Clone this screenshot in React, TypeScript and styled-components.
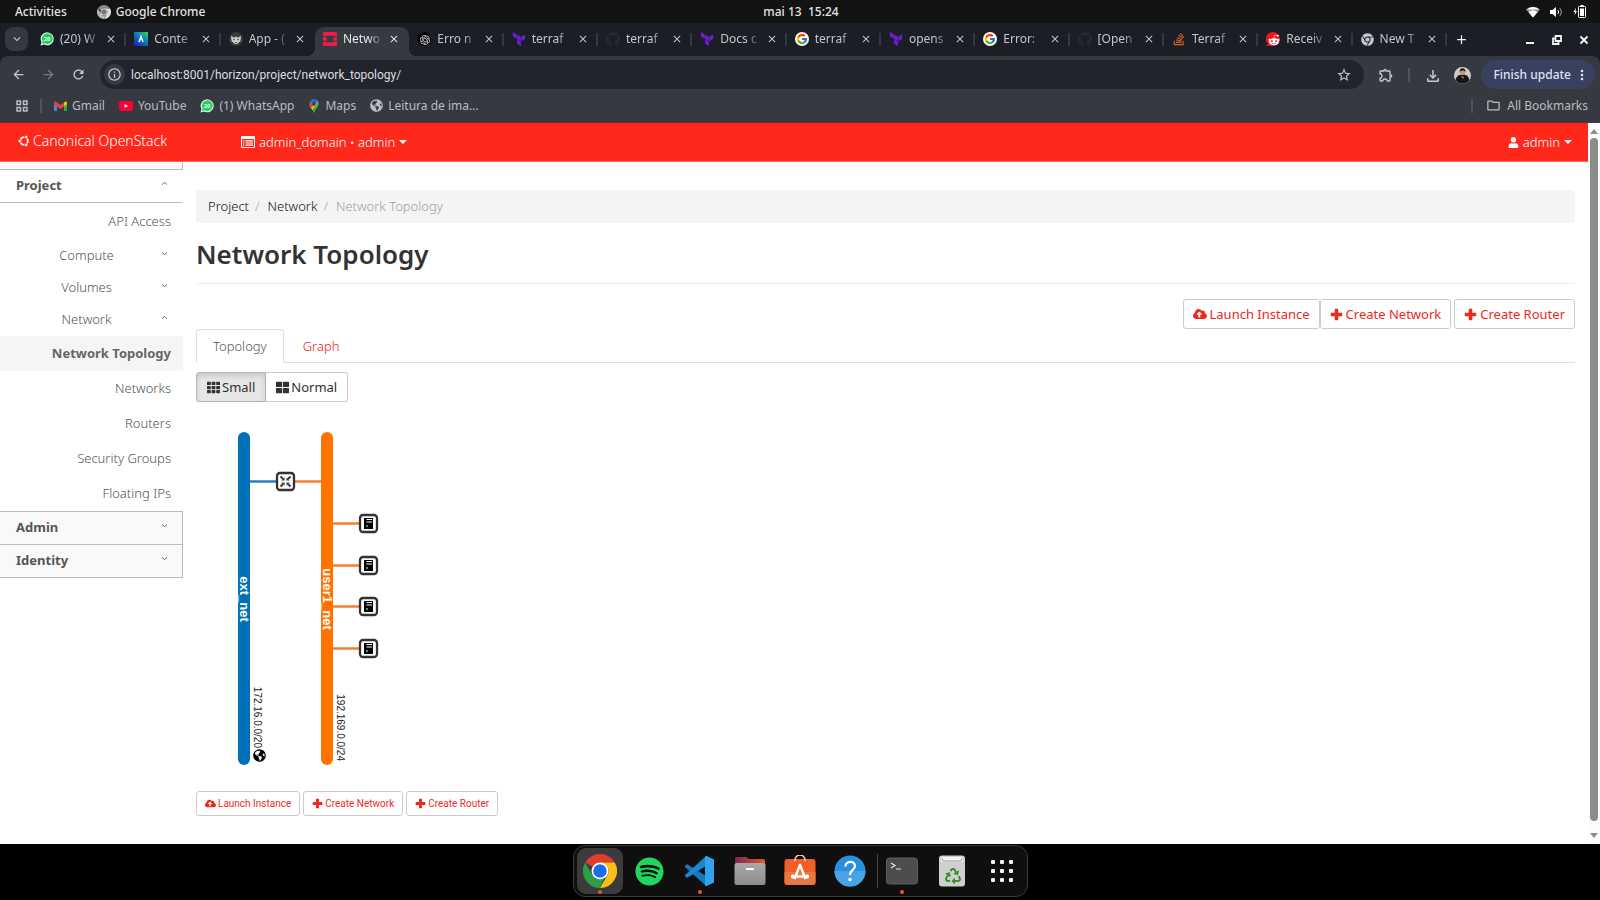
import React from 'react';
import styled, { createGlobalStyle, css } from 'styled-components';
import {
  FaUser, FaCloudUploadAlt, FaTh, FaThLarge, FaGithub, FaStackOverflow, FaChrome,
  FaRedditAlien, FaSpotify, FaRecycle, FaGlobeAmericas,
} from 'react-icons/fa';
import { SiTerraform } from 'react-icons/si';
import { RiOpenaiFill } from 'react-icons/ri';
import { FcGoogle } from 'react-icons/fc';
import {
  MdArrowBack, MdArrowForward, MdRefresh, MdOutlineInfo, MdStarBorder, MdOutlineExtension,
  MdOutlineFileDownload, MdMoreVert, MdOutlineFolder, MdClose, MdAdd, MdExpandMore,
} from 'react-icons/md';

const UI = `"Noto Sans", "Open Sans", sans-serif`;
const COMPACT = `Roboto, "Noto Sans", sans-serif`;
const RED = '#ff281a';

const GlobalStyle = createGlobalStyle`
  *, *::before, *::after { box-sizing: border-box; }
  body { margin: 0; background: #000; }
  button, input { font: inherit; color: inherit; margin: 0; padding: 0; border: 0; background: none; }
  button { cursor: pointer; }
  a { color: inherit; text-decoration: none; }
  ul, ol { list-style: none; margin: 0; padding: 0; }
  svg { display: block; flex: none; }
`;

const Desktop = styled.div`
  min-height: 100vh;
  display: flex;
  flex-direction: column;
  background: #000;
  font-family: ${UI};
`;

/* ---------- system bar ---------- */
const SystemBar = styled.header`
  display: grid;
  grid-template-columns: 1fr auto 1fr;
  align-items: center;
  height: 23px;
  padding: 0 13px 0 15px;
  background: #131313;
  color: #e2e2e2;
  font-size: 12px;
  line-height: 16px;
  font-weight: 500;
`;
const SystemLeft = styled.div`
  display: flex;
  align-items: center;
  gap: 30px;
`;
const AppMenu = styled.button`
  display: flex;
  align-items: center;
  gap: 5px;
`;
const Clock = styled.time`
  white-space: pre;
`;
const Tray = styled.div`
  display: flex;
  align-items: center;
  justify-content: flex-end;
  gap: 10px;
`;

/* ---------- browser chrome ---------- */
const TabStrip = styled.div`
  display: flex;
  align-items: stretch;
  height: 33px;
  padding-left: 5px;
  background: #1b1e26;
  color: #c3c6cd;
`;
const TabSearch = styled.button`
  display: grid;
  place-items: center;
  width: 23px;
  height: 24px;
  margin: 4px 4px 0 0;
  border-radius: 8px;
  background: #363840;
`;
const TabList = styled.div`
  display: flex;
  flex: 1;
  min-width: 0;
  padding-top: 4px;
`;
const Tab = styled.div<{ $active?: boolean; $divider?: boolean }>`
  position: relative;
  display: flex;
  flex: 1 1 0;
  min-width: 0;
  align-items: center;
  gap: 6px;
  padding: 0 9px 5px 8px;
  font-size: 12px;
  line-height: 18px;
  ${p => p.$divider && css`
    &::after {
      content: '';
      position: absolute;
      right: 0;
      top: 6px;
      height: 13px;
      border-right: 2px solid #343843;
    }
  `}
  ${p => p.$active && css`
    background: #373941;
    color: #e6e7ea;
    border-radius: 9px 9px 0 0;
    &::before, &::after {
      content: '';
      position: absolute;
      bottom: 0;
      width: 8px;
      height: 8px;
    }
    &::before { left: -8px; background: radial-gradient(circle at 0 0, transparent 8px, #373941 8px); }
    &::after { right: -8px; background: radial-gradient(circle at 100% 0, transparent 8px, #373941 8px); }
  `}
`;
const TabTitle = styled.span`
  flex: 1;
  min-width: 0;
  white-space: pre;
  mask-image: linear-gradient(90deg, #000 65%, rgba(0, 0, 0, 0.1));
`;
const TabClose = styled.button`
  display: grid;
  place-items: center;
  width: 12px;
  height: 12px;
`;
const WindowControls = styled.div`
  display: flex;
  align-items: center;
  justify-content: space-between;
  width: 153px;
  padding: 0 8px 0 6px;
  color: #f1f1f1;
`;
const WindowButtons = styled.div`
  display: flex;
  gap: 11px;
`;

const ToolbarBack = styled.div`
  background: #1b1e26;
`;
const Toolbar = styled.div`
  display: flex;
  align-items: center;
  height: 37px;
  padding: 0 5px 0 10px;
  background: #373941;
  border-radius: 8px 8px 0 0;
  color: #c7cad1;
`;
const NavButtons = styled.div`
  display: flex;
  gap: 14px;
  padding-right: 14px;
`;
const IconButton = styled.button<{ $dim?: boolean }>`
  display: grid;
  place-items: center;
  width: 16px;
  height: 16px;
  opacity: ${p => (p.$dim ? 0.45 : 1)};
`;
const AddressBar = styled.form`
  display: flex;
  flex: 1;
  align-items: center;
  height: 29px;
  padding: 0 12px 0 4px;
  border-radius: 15px;
  background: #22242c;
`;
const SiteInfo = styled.button`
  display: grid;
  place-items: center;
  width: 21px;
  height: 21px;
  border-radius: 50%;
  background: #373941;
`;
const AddressInput = styled.input`
  flex: 1;
  min-width: 0;
  margin-left: 6px;
  outline: none;
  font-family: ${COMPACT};
  font-size: 12px;
  line-height: 18px;
  color: #dcdde0;
`;
const ToolbarRight = styled.div`
  display: flex;
  align-items: center;
  gap: 14px;
  padding-left: 14px;
`;
const Divider = styled.span`
  flex: none;
  width: 2px;
  height: 14px;
  background: #50535c;
`;
const UpdateButton = styled.button`
  display: flex;
  align-items: center;
  gap: 3px;
  height: 29px;
  padding: 0 5px 0 12px;
  margin-left: -3px;
  border-radius: 15px;
  background: #394060;
  color: #dfe2f2;
  font-weight: 500;
  font-size: 12px;
  line-height: 18px;
`;
const BookmarksBar = styled.nav`
  display: flex;
  align-items: center;
  height: 30px;
  padding: 0 12px 4px 14px;
  background: #373941;
  border-bottom: 1px solid #50353a;
  color: #b9bcc3;
  font-size: 12px;
  line-height: 18px;
`;
const BookmarkList = styled.div`
  display: flex;
  flex: 1;
  gap: 14px;
  margin-left: 12px;
  padding-left: 0;
`;
const Bookmark = styled.a`
  display: flex;
  align-items: center;
  gap: 5px;
`;
const AppsDivider = styled(Divider)`
  margin-left: 10px;
`;
const AllBookmarks = styled.button`
  display: flex;
  align-items: center;
  gap: 6px;
  margin-left: 13px;
`;

/* ---------- dashboard ---------- */
const Viewport = styled.div`
  display: flex;
  flex: 1;
  background: #fff;
`;
const Dashboard = styled.div`
  flex: 1;
  min-width: 0;
  font-size: 13px;
  line-height: 18px;
  font-weight: 300;
  color: #333;
`;
const Masthead = styled.header`
  display: flex;
  align-items: center;
  height: 39px;
  padding: 0 16px 0 18px;
  background: ${RED};
  border-bottom: 1px solid #ff6458;
  color: #fff;
`;
const Brand = styled.a`
  display: flex;
  align-items: center;
  gap: 3px;
  width: 223px;
  padding-bottom: 3px;
  font-size: 14px;
`;
const MenuButton = styled.button`
  display: flex;
  align-items: center;
  gap: 4px;
  font-weight: 300;
`;
const Spacer = styled.span`
  flex: 1;
`;
const Body = styled.div`
  display: flex;
  align-items: flex-start;
`;
const Sidebar = styled.nav`
  flex: none;
  width: 183px;
`;
const SidebarTop = styled.div`
  height: 8px;
  background: #f9f9f9;
  border: solid #bbb;
  border-width: 0 1px 1px 0;
`;
const PanelHeader = styled.button<{ $open?: boolean }>`
  display: flex;
  align-items: center;
  justify-content: space-between;
  width: 100%;
  height: 33px;
  padding: 0 14px 2px 16px;
  border-bottom: 1px solid #bbb;
  border-right: 1px solid ${p => (p.$open ? '#fff' : '#bbb')};
  background: ${p => (p.$open ? '#fff' : '#f9f9f9')};
  color: #555;
  font-weight: 700;
`;
const PanelList = styled.ul`
  padding-top: 1px;
  border-bottom: 1px solid #bbb;
`;
const GroupHeader = styled.button`
  display: grid;
  grid-template-columns: 1fr auto;
  align-items: center;
  width: 100%;
  height: 32px;
  padding: 0 15px 0 12px;
  color: #555;
  font-weight: 300;
`;
const SubList = styled.ul`
  padding-top: 1px;
`;
const NavLink = styled.a<{ $current?: boolean }>`
  display: block;
  height: 35px;
  padding: 8px 12px 9px 0;
  text-align: right;
  color: ${p => (p.$current ? '#666' : '#555')};
  background: ${p => (p.$current ? '#f5f5f5' : 'transparent')};
  font-weight: ${p => (p.$current ? 700 : 300)};
`;

const Main = styled.main`
  flex: 1;
  min-width: 0;
  padding: 28px 13px 27px;
`;
const Breadcrumb = styled.ol`
  display: flex;
  gap: 8px;
  height: 33px;
  padding: 7px 12px 8px;
  border-radius: 4px;
  background: #f4f4f4;
`;
const Crumb = styled.li<{ $last?: boolean }>`
  display: flex;
  gap: 6px;
  color: ${p => (p.$last ? '#a0a0a0' : '#111')};
  &:not(:last-child)::after { content: '/'; color: #aaa; }
`;
const Title = styled.h1`
  margin: 16px 0 15px;
  padding-bottom: 14px;
  border-bottom: 1px solid #eee;
  font-size: 26px;
  line-height: 30px;
  font-weight: 600;
  color: #333;
`;
const Actions = styled.div<{ $end?: boolean }>`
  display: flex;
  gap: 3px;
  justify-content: ${p => (p.$end ? 'flex-end' : 'flex-start')};
`;
const ActionGroup = styled.div`
  display: flex;
`;
const ActionButton = styled.button<{ $small?: boolean }>`
  display: flex;
  align-items: center;
  gap: ${p => (p.$small ? 2 : 3)}px;
  height: ${p => (p.$small ? 25 : 30)}px;
  padding: 0 ${p => (p.$small ? 8 : 9)}px;
  border: 1px solid #ccc;
  border-radius: 3px;
  background: #fff;
  color: #f0281c;
  font-family: ${p => (p.$small ? COMPACT : UI)};
  font-size: ${p => (p.$small ? 10 : 13)}px;
  font-weight: 400;
  white-space: nowrap;
`;
const ViewTabs = styled.div`
  display: flex;
  gap: 2px;
  height: 34px;
  border-bottom: 1px solid #ddd;
`;
const ViewTab = styled.button<{ $active?: boolean }>`
  height: 34px;
  padding: 0 16px;
  border: 1px solid ${p => (p.$active ? '#ddd' : 'transparent')};
  border-bottom-color: ${p => (p.$active ? '#fff' : 'transparent')};
  border-radius: 4px 4px 0 0;
  color: ${p => (p.$active ? '#555' : '#f0180c')};
  font-weight: 300;
`;
const SizeToggle = styled.div`
  display: flex;
  margin: 9px 0 10px;
`;
const SizeButton = styled.button<{ $pressed?: boolean }>`
  display: flex;
  align-items: center;
  gap: 2px;
  height: 30px;
  padding: 0 10px;
  border: 1px solid ${p => (p.$pressed ? '#b5b5b5' : '#ccc')};
  border-radius: ${p => (p.$pressed ? '3px 0 0 3px' : '0 3px 3px 0')};
  border-left-width: ${p => (p.$pressed ? 1 : 0)}px;
  background: ${p => (p.$pressed ? '#e6e6e6' : '#fff')};
  box-shadow: ${p => (p.$pressed ? 'inset 0 3px 5px rgba(0, 0, 0, 0.125)' : 'none')};
  color: #333;
  font-weight: 400;
`;
const Canvas = styled.svg`
  margin-bottom: 10px;
`;

const Scrollbar = styled.div`
  display: flex;
  flex-direction: column;
  align-items: center;
  width: 12px;
  padding: 6px 0;
  background: #fcfcfc;
  gap: 4px;
`;
const Thumb = styled.div`
  flex: 1;
  width: 8px;
  margin-bottom: 8px;
  border-radius: 4px;
  background: #8b8b8b;
`;
const Arrow = styled.span<{ $down?: boolean }>`
  border: solid transparent;
  border-width: ${p => (p.$down ? '5px 4px 0' : '0 4px 5px')};
  border-${p => (p.$down ? 'top' : 'bottom')}-color: #8b8b8b;
`;

/* ---------- dock ---------- */
const DockArea = styled.footer`
  display: flex;
  justify-content: center;
  height: 56px;
  padding: 1px 0 3px;
  background: #000;
`;
const Dock = styled.nav`
  display: flex;
  align-items: center;
  gap: 4px;
  padding: 0 2px 0 3px;
  border: 1px solid #3c3c3c;
  border-radius: 12px;
  background: #0f0f0f;
`;
const DockItem = styled.button<{ $focused?: boolean; $running?: boolean }>`
  position: relative;
  display: grid;
  place-items: center;
  width: 46px;
  height: 46px;
  border-radius: 9px;
  background: ${p => (p.$focused ? '#3b3b3b' : 'transparent')};
  ${p => p.$running && css`
    &::after {
      content: '';
      position: absolute;
      left: 21px;
      bottom: 0;
      width: 4px;
      height: 4px;
      border-radius: 50%;
      background: #e2562b;
    }
  `}
`;
const DockRule = styled.span`
  width: 1px;
  height: 34px;
  margin-right: -3px;
  background: #4a4a4a;
`;

/* ---------- drawings ---------- */
const WhatsApp = () => (
  <svg width="14" height="14" viewBox="0 0 28 28" aria-hidden>
    <path d="M1 27l2-7A13 13 0 1 1 8 25z" fill="#e9fbef" />
    <path d="M4 24l1.400-5A10.800 10.800 0 1 1 9 22.600z" fill="#1fd15e" />
    <text x="14" y="18" textAnchor="middle" fontFamily="Noto Sans, sans-serif" fontWeight="700" fontSize="11" fill="#fff">20</text>
  </svg>
);
const Adonis = () => (
  <svg width="14" height="14" viewBox="0 0 14 14" aria-hidden>
    <defs>
      <linearGradient id="adonis" x1="1" y1="0" x2="0.200" y2="1">
        <stop offset="0" stopColor="#2fe04a" /><stop offset="0.500" stopColor="#0a7bc0" /><stop offset="1" stopColor="#1a2bb8" />
      </linearGradient>
    </defs>
    <rect width="14" height="14" fill="url(#adonis)" />
    <path d="M5 10l2-5.500L9 10" fill="none" stroke="#fff" strokeWidth="1.500" />
  </svg>
);
const Wolf = () => (
  <svg width="14" height="14" viewBox="0 0 14 14" aria-hidden>
    <circle cx="7" cy="7" r="7" fill="#3a3b3e" />
    <path d="M2 4l3 1.500h1L7 4l1 1.500h1L12 4l-.5 5L8 12H6L2.500 9z" fill="#cfcfcf" />
    <path d="M4 6.500l2 1-1 1zM10 6.500l-2 1 1 1zM6 10h2l-1 1.500z" fill="#222" />
  </svg>
);
const OpenStack = () => (
  <svg width="14" height="14" viewBox="0 0 14 14" fill="#ee1c46" aria-hidden>
    <path d="M1 0h12a1 1 0 0 1 1 1v3.300h-3.700V3.700H3.700v.6H0V1a1 1 0 0 1 1-1zM0 5.200h3.700v3.600H0zM10.300 5.200H14v3.600h-3.700zM0 9.700h3.700v.6h6.600v-.6H14V13a1 1 0 0 1-1 1H1a1 1 0 0 1-1-1z" />
  </svg>
);
const OpenAI = () => (
  <svg width="14" height="14" viewBox="0 0 14 14" aria-hidden>
    <circle cx="7" cy="7" r="7" fill="#000" />
    <RiOpenaiFill x="2" y="2" width="10" height="10" color="#e8e8e8" />
  </svg>
);
const GoogleDisc = () => (
  <svg width="14" height="14" viewBox="0 0 14 14" aria-hidden>
    <circle cx="7" cy="7" r="7" fill="#fff" />
    <FcGoogle x="1" y="1" width="12" height="12" />
  </svg>
);
const Reddit = () => (
  <svg width="14" height="14" viewBox="0 0 14 14" aria-hidden>
    <path d="M7 0a7 7 0 1 1 0 14H0l2-2A7 7 0 0 1 7 0z" fill="#f0141e" />
    <FaRedditAlien x="2" y="2" width="10" height="10" color="#fff" />
  </svg>
);
const Chrome = ({ size, grey }: { size: number; grey?: boolean }) => {
  const [top, right, left, ring, core] = grey
    ? ['#8a8a8a', '#dcdcdc', '#b9b9b9', '#f0f0f0', '#777']
    : ['#e33b2e', '#f9bf17', '#2c9e4b', '#fff', '#1a6fe8'];
  return (
    <svg width={size} height={size} viewBox="0 0 48 48" aria-hidden>
      <path d="M24 0a24 24 0 0 1 20.800 12H24A12 12 0 0 0 13.600 18L3.200 12A24 24 0 0 1 24 0z" fill={top} />
      <path d="M44.800 12A24 24 0 0 1 24 48l10.400-18A12 12 0 0 0 34.400 18L24 12z" fill={right} />
      <path d="M3.200 12l10.400 18A12 12 0 0 0 30 34.400L24 48A24 24 0 0 1 3.200 12z" fill={left} />
      <circle cx="24" cy="24" r="12" fill={ring} />
      <circle cx="24" cy="24" r="9.500" fill={core} />
    </svg>
  );
};
const Gmail = () => (
  <svg width="13" height="14" viewBox="0 0 13 14" aria-hidden>
    <path d="M0 4h3v8H1a1 1 0 0 1-1-1z" fill="#4285f4" />
    <path d="M10 4h3v7a1 1 0 0 1-1 1h-2z" fill="#34a853" />
    <path d="M10 3.500l1-.8c1-.6 2 0 2 1.100v1.500l-3 2.200z" fill="#fbbc04" />
    <path d="M0 3.800c0-1.100 1-1.700 2-1.100L6.500 6 10 3.500v4L6.500 10 3 7.500 0 5.300z" fill="#ea4335" />
  </svg>
);
const YouTube = () => (
  <svg width="14" height="14" viewBox="0 0 14 14" aria-hidden>
    <rect y="2" width="14" height="10" rx="2.500" fill="#ff0033" />
    <path d="M5.500 5v4L9 7z" fill="#fff" />
  </svg>
);
const MapsPin = () => (
  <svg width="12" height="14" viewBox="0 0 12 14" aria-hidden>
    <path d="M6 14C5.500 11.500 2 9 1.500 6L6 4l4.500 1c0 3.500-4 5.500-4.500 9z" fill="#34a853" />
    <path d="M1.500 6.500A4.600 4.600 0 0 1 2.500 2L6 5 3 8.800z" fill="#ea4335" />
    <path d="M2.500 2A4.600 4.600 0 0 1 8 .5L4 5z" fill="#1a73e8" />
    <path d="M8 .5A4.600 4.600 0 0 1 10.300 3L6 7z" fill="#4285f4" />
    <path d="M3 8.800L10.300 3c.6 2-.3 3.800-1.600 5.200L5.500 12z" fill="#fbbc04" />
    <path d="M8 8.800c1.800-2 2.800-3.300 2.300-5.800L4.700 10.500 6 14z" fill="#34a853" />
    <circle cx="6" cy="5" r="1.700" fill="#2b3f76" />
  </svg>
);
const AppsGrid = () => (
  <svg width="12" height="12" viewBox="0 0 12 12" fill="none" stroke="currentColor" strokeWidth="1.500" aria-hidden>
    <path d="M1 1h3.500v3.500H1zM7.500 1H11v3.500H7.500zM1 7.500h3.500V11H1zM7.500 7.500H11V11H7.500z" />
  </svg>
);
const Avatar = () => (
  <svg width="17" height="17" viewBox="0 0 17 17" aria-hidden>
    <circle cx="8.500" cy="8.500" r="8.500" fill="#cfcac6" />
    <path d="M1.500 13c1-4 3-5 5-5.300h4c3 .5 4 2 5 5.300A8.500 8.500 0 0 1 1.500 13z" fill="#15161a" />
    <circle cx="8.500" cy="5.200" r="2.800" fill="#c9977d" />
    <path d="M5.600 5c-.3-5 6.200-5 5.900 0-1-2-4.600-2-5.900 0z" fill="#1d1815" />
    <path d="M7 9l2 3 1-2z" fill="#b98870" />
  </svg>
);
const Wifi = () => (
  <svg width="14" height="12" viewBox="0 0 14 12" aria-hidden>
    <path d="M0 3.500a10 10 0 0 1 14 0L7 11.500z" fill="#8d8d8d" />
    <path d="M2.500 6a7 7 0 0 1 9 0L7 11.500zM.5 3.600a9.500 9.500 0 0 1 13 0" fill="#fff" />
  </svg>
);
const Volume = () => (
  <svg width="13" height="12" viewBox="0 0 13 12" fill="none" stroke="#fff" aria-hidden>
    <path d="M0 4h2.500L6 1v10L2.500 8H0z" fill="#fff" stroke="none" />
    <path d="M7.800 4a3 3 0 0 1 0 4" /><path d="M9.800 2.200a6 6 0 0 1 0 7.600" stroke="#aaa" />
  </svg>
);
const Battery = () => (
  <svg width="14" height="13" viewBox="0 0 14 13" aria-hidden>
    <path d="M3 2.500L.5 7H2l-.6 3.500L4 6H2.500z" fill="#fff" />
    <rect x="5.500" y="1.500" width="7" height="11" rx="1" fill="none" stroke="#fff" />
    <path d="M7.500 0h3v1.500h-3zM7 3.500h4v7.500H7z" fill="#fff" />
  </svg>
);
const CircleOfFriends = () => (
  <svg width="12" height="12" viewBox="0 0 12 12" aria-hidden>
    <circle cx="6" cy="6" r="3.800" fill="none" stroke="#fff" strokeWidth="1.800" />
    <g fill="#fff" stroke={RED} strokeWidth="0.800">
      <circle cx="1.700" cy="6" r="1.700" /><circle cx="8.200" cy="2" r="1.700" /><circle cx="8.200" cy="10" r="1.700" />
    </g>
  </svg>
);
const DomainIcon = () => (
  <svg width="14" height="12" viewBox="0 0 14 12" aria-hidden>
    <path d="M1 0h12a1 1 0 0 1 1 1v10a1 1 0 0 1-1 1H1a1 1 0 0 1-1-1V1a1 1 0 0 1 1-1zm0 3v8h12V3z" fill="#fff" fillRule="evenodd" />
    <path d="M2 4.800h1.200M4.500 4.800H12M2 7h1.200M4.500 7H12M2 9.200h1.200M4.500 9.200H12" stroke="#fff" strokeWidth="1.200" />
  </svg>
);
const Caret = () => (
  <svg width="8" height="4" viewBox="0 0 8 4" fill="#fff" aria-hidden><path d="M0 0h8L4 4z" /></svg>
);
const Plus = ({ size }: { size: number }) => (
  <svg width={size} height={size} viewBox="0 0 12 12" fill="currentColor" aria-hidden>
    <path d="M5 .7h2a.6.600 0 0 1 .6.600v3.100h3.100a.6.600 0 0 1 .6.600v2a.6.600 0 0 1-.6.600H7.600v3.100a.6.600 0 0 1-.6.600H5a.6.600 0 0 1-.6-.6V7.600H1.300A.6.600 0 0 1 .7 7V5a.6.600 0 0 1 .6-.6h3.100V1.300A.6.600 0 0 1 5 .7z" />
  </svg>
);
const Chevron = ({ up }: { up?: boolean }) => (
  <svg width="7" height="10" viewBox="0 0 7 10" fill="none" stroke="#666" aria-hidden>
    <path d={up ? 'M1 4.500l2.500-2 2.500 2' : 'M1 2.500l2.500 2 2.500-2'} />
  </svg>
);
const VsCode = () => (
  <svg width="31" height="30" viewBox="0 0 31 30" aria-hidden>
    <path d="M3 8L.5 10.500 21 29l2.500 1V21z" fill="#1779bd" />
    <path d="M3 22L.5 19.500 21 1l2.500-1v9z" fill="#1a86cc" />
    <path d="M22.500 0L30 3.500v23L22.500 30c-.8 0-1.500-.5-1.500-1.500v-27C21 .5 21.700 0 22.500 0z" fill="#2fa4ec" />
  </svg>
);
const Files = () => (
  <svg width="32" height="30" viewBox="0 0 32 30" aria-hidden>
    <defs>
      <linearGradient id="folder"><stop offset="0" stopColor="#7a2a50" /><stop offset="1" stopColor="#e5572a" /></linearGradient>
      <linearGradient id="drawer" x1="0" y1="0" x2="0" y2="1"><stop offset="0" stopColor="#a9a9a9" /><stop offset="1" stopColor="#8d8d8d" /></linearGradient>
    </defs>
    <path d="M3 1h9l3 2h14a2 2 0 0 1 2 2v7H1V3a2 2 0 0 1 2-2z" fill="url(#folder)" />
    <rect x="0.500" y="7" width="31" height="22" rx="2.500" fill="url(#drawer)" />
    <rect x="12" y="12" width="8" height="2" fill="#fff" />
  </svg>
);
const Software = () => (
  <svg width="32" height="32" viewBox="0 0 32 32" aria-hidden>
    <rect x="0.500" y="4" width="31" height="26" rx="3" fill="#f2602a" />
    <path d="M.5 17h31v10a3 3 0 0 1-3 3h-25a3 3 0 0 1-3-3z" fill="#ea7642" />
    <path d="M11 6V5a5 5 0 0 1 10 0v1" fill="none" stroke="#f0d9b5" strokeWidth="1.500" />
    <path d="M10.500 24L16 10l5.500 14M7 21.500h18M9 19.500v4M23 19.500v4" fill="none" stroke="#fff" strokeWidth="2.500" strokeLinejoin="round" />
  </svg>
);
const Help = () => (
  <svg width="32" height="32" viewBox="0 0 32 32" aria-hidden>
    <circle cx="16" cy="16" r="15.500" fill="#2a8fdd" />
    <path d="M.5 16a15.500 15.500 0 0 0 31 0z" fill="#4aa3e6" />
    <path d="M11.500 11.500c0-6 9.500-6 9.500-.5 0 4-5 4-5 9" fill="none" stroke="#fff" strokeWidth="2.200" />
    <circle cx="16" cy="24.500" r="1.700" fill="#fff" />
  </svg>
);
const Terminal = () => (
  <svg width="32" height="28" viewBox="0 0 32 28" aria-hidden>
    <rect x="0.500" y="1" width="31" height="26" rx="3" fill="#4d4d4d" stroke="#5e5e5e" />
    <path d="M5 6l4 2.500L5 11M10 12h5" fill="none" stroke="#e8e8e8" strokeWidth="1.200" />
  </svg>
);
const Trash = () => (
  <svg width="26" height="32" viewBox="0 0 26 32" aria-hidden>
    <rect x="0" y="0.500" width="26" height="31" rx="3" fill="#cfcfcf" />
    <rect x="2" y="2" width="22" height="5" rx="1" fill="#f3f3f3" />
    <path d="M3 3l1 3h18l1-3" fill="none" stroke="#9b9b9b" />
    <FaRecycle x="6" y="13" width="14" height="14" color="#3a8f2c" />
  </svg>
);
const ShowApps = () => (
  <svg width="22" height="22" viewBox="0 0 22 22" fill="#f2f2f2" aria-hidden>
    {[0, 9, 18].map(y => [0, 9, 18].map(x => <rect key={`${x}-${y}`} x={x} y={y} width="4" height="4" rx="1" />))}
  </svg>
);

const instanceRows = [111, 153, 194, 236];

const RouterNode = ({ x, y }: { x: number; y: number }) => (
  <g transform={`translate(${x} ${y})`}>
    <rect x="-8.500" y="-8.500" width="17" height="17" rx="3" fill="#fff" stroke="#333" strokeWidth="2.300" />
    <g stroke="#333" strokeWidth="1.800" fill="#333">
      {[0, 90, 180, 270].map(a => (
        <g key={a} transform={`rotate(${a})`}>
          <path d="M-5-5l2.500 2.500" />
          <path d="M-1-4.200v3.200h-3.200z" stroke="none" />
        </g>
      ))}
    </g>
  </g>
);
const InstanceNode = ({ x, y }: { x: number; y: number }) => (
  <g transform={`translate(${x} ${y})`}>
    <rect x="-8.500" y="-8.500" width="17" height="17" rx="3" fill="#fff" stroke="#333" strokeWidth="2.300" />
    <rect x="-4.500" y="-5.500" width="9" height="11" fill="#000" />
    <path d="M-2-4h5.500M-2-1.500h5.500" stroke="#fff" strokeWidth="1.200" />
    <rect x="-2.500" y="1.500" width="2" height="2" fill="#1fae55" />
  </g>
);

const Topology = () => (
  <Canvas width="220" height="369" viewBox="0 0 220 369" role="img" aria-label="Network topology">
    <rect x="42" y="20" width="12" height="333" rx="6" fill="#0070b8" />
    <rect x="125" y="20" width="12" height="333" rx="6" fill="#ff7200" />
    <path d="M54 69.500h27" stroke="#2b7fbd" strokeWidth="2.500" />
    <path d="M98 69.500h27" stroke="#f2812e" strokeWidth="2.500" />
    <RouterNode x={89.5} y={69.5} />
    {instanceRows.map(y => (
      <g key={y}>
        <path d={`M137 ${y}.500h27`} stroke="#f2812e" strokeWidth="2.500" />
        <InstanceNode x={172.5} y={y + 0.5} />
      </g>
    ))}
    <g fontFamily="Liberation Sans, Arial, sans-serif">
      <g fontSize="13" fontWeight="700" fill="#fff" textAnchor="middle">
        <text transform="translate(44 187) rotate(90)">ext_net</text>
        <text transform="translate(127 187) rotate(90)">user1_net</text>
      </g>
      <g fontSize="10" fill="#222" textAnchor="end">
        <text transform="translate(58 336) rotate(90)">172.16.0.0/20</text>
        <text transform="translate(141 349) rotate(90)">192.169.0.0/24</text>
      </g>
    </g>
    <FaGlobeAmericas x="57" y="337" width="12" height="12" color="#000" />
  </Canvas>
);

const tabs: { title: string; icon: React.ReactNode; active?: boolean; divider?: boolean }[] = [
  { title: '(20) W', icon: <WhatsApp />, divider: true },
  { title: 'Conte', icon: <Adonis />, divider: true },
  { title: 'App - (', icon: <Wolf /> },
  { title: 'Netwo', icon: <OpenStack />, active: true },
  { title: 'Erro n', icon: <OpenAI />, divider: true },
  { title: 'terraf', icon: <SiTerraform size={14} color="#6a1fd0" />, divider: true },
  { title: 'terraf', icon: <FaGithub size={14} color="#272a32" />, divider: true },
  { title: 'Docs c', icon: <SiTerraform size={14} color="#6a1fd0" />, divider: true },
  { title: 'terraf', icon: <GoogleDisc />, divider: true },
  { title: 'opens', icon: <SiTerraform size={14} color="#6a1fd0" />, divider: true },
  { title: 'Error:', icon: <GoogleDisc />, divider: true },
  { title: '[Open', icon: <FaGithub size={14} color="#272a32" />, divider: true },
  { title: 'Terraf', icon: <FaStackOverflow size={14} color="#d9622b" />, divider: true },
  { title: 'Receiv', icon: <Reddit />, divider: true },
  { title: 'New T', icon: <FaChrome size={13} color="#c4c7ce" />, divider: true },
];

const networkPages = ['Network Topology', 'Networks', 'Routers', 'Security Groups', 'Floating IPs'];

export default function App() {
  return (
    <Desktop>
      <GlobalStyle />
      <SystemBar>
        <SystemLeft>
          <button>Activities</button>
          <AppMenu><Chrome size={14} grey />Google Chrome</AppMenu>
        </SystemLeft>
        <Clock>{'mai 13  15:24'}</Clock>
        <Tray><Wifi /><Volume /><Battery /></Tray>
      </SystemBar>

      <TabStrip>
        <TabSearch aria-label="Search tabs"><MdExpandMore size={14} /></TabSearch>
        <TabList role="tablist">
          {tabs.map((t, i) => (
            <Tab key={i} role="tab" aria-selected={!!t.active} $active={t.active} $divider={t.divider}>
              {t.icon}
              <TabTitle>{t.title}</TabTitle>
              <TabClose aria-label="Close tab"><MdClose size={12} /></TabClose>
            </Tab>
          ))}
        </TabList>
        <WindowControls>
          <IconButton aria-label="New tab"><MdAdd size={15} /></IconButton>
          <WindowButtons>
            <IconButton aria-label="Minimize">
              <svg width="10" height="10" viewBox="0 0 10 10"><path d="M1 8h8" stroke="currentColor" strokeWidth="2" /></svg>
            </IconButton>
            <IconButton aria-label="Restore">
              <svg width="10" height="10" viewBox="0 0 10 10" fill="none" stroke="currentColor" strokeWidth="1.800">
                <path d="M3.500 1H9v5H3.500zM3 3.500H1V9h5.500V7" />
              </svg>
            </IconButton>
            <IconButton aria-label="Close window">
              <svg width="10" height="10" viewBox="0 0 10 10"><path d="M1.500 1.500l7 7M8.500 1.500l-7 7" stroke="currentColor" strokeWidth="2" /></svg>
            </IconButton>
          </WindowButtons>
        </WindowControls>
      </TabStrip>

      <ToolbarBack>
        <Toolbar>
          <NavButtons>
            <IconButton aria-label="Back"><MdArrowBack size={15} /></IconButton>
            <IconButton aria-label="Forward" $dim><MdArrowForward size={15} /></IconButton>
            <IconButton aria-label="Reload"><MdRefresh size={15} /></IconButton>
          </NavButtons>
          <AddressBar>
            <SiteInfo type="button" aria-label="Site information"><MdOutlineInfo size={15} /></SiteInfo>
            <AddressInput aria-label="Address" defaultValue="localhost:8001/horizon/project/network_topology/" />
            <IconButton type="button" aria-label="Bookmark this page"><MdStarBorder size={16} /></IconButton>
          </AddressBar>
          <ToolbarRight>
            <IconButton aria-label="Extensions"><MdOutlineExtension size={16} /></IconButton>
            <Divider />
            <IconButton aria-label="Downloads"><MdOutlineFileDownload size={18} /></IconButton>
            <IconButton aria-label="Profile"><Avatar /></IconButton>
            <UpdateButton>Finish update<MdMoreVert size={16} /></UpdateButton>
          </ToolbarRight>
        </Toolbar>
      </ToolbarBack>

      <BookmarksBar aria-label="Bookmarks">
        <IconButton aria-label="Apps"><AppsGrid /></IconButton>
        <AppsDivider />
        <BookmarkList>
          <Bookmark href="#gmail"><Gmail />Gmail</Bookmark>
          <Bookmark href="#youtube"><YouTube />YouTube</Bookmark>
          <Bookmark href="#whatsapp"><WhatsApp />(1) WhatsApp</Bookmark>
          <Bookmark href="#maps"><MapsPin />Maps</Bookmark>
          <Bookmark href="#leitura"><FaGlobeAmericas size={13} />Leitura de ima…</Bookmark>
        </BookmarkList>
        <Divider />
        <AllBookmarks><MdOutlineFolder size={15} />All Bookmarks</AllBookmarks>
      </BookmarksBar>

      <Viewport>
        <Dashboard>
          <Masthead>
            <Brand href="#home"><CircleOfFriends />Canonical OpenStack</Brand>
            <MenuButton><DomainIcon />admin_domain • admin<Caret /></MenuButton>
            <Spacer />
            <MenuButton><FaUser size={11} />admin<Caret /></MenuButton>
          </Masthead>
          <Body>
            <Sidebar aria-label="Dashboard">
              <SidebarTop />
              <PanelHeader $open aria-expanded>Project<Chevron up /></PanelHeader>
              <PanelList>
                <li><NavLink href="#api">API Access</NavLink></li>
                <li><GroupHeader>Compute<Chevron /></GroupHeader></li>
                <li><GroupHeader>Volumes<Chevron /></GroupHeader></li>
                <li>
                  <GroupHeader aria-expanded>Network<Chevron up /></GroupHeader>
                  <SubList>
                    {networkPages.map((p, i) => (
                      <li key={p}><NavLink href={`#net-${i}`} $current={i === 0}>{p}</NavLink></li>
                    ))}
                  </SubList>
                </li>
              </PanelList>
              <PanelHeader>Admin<Chevron /></PanelHeader>
              <PanelHeader>Identity<Chevron /></PanelHeader>
            </Sidebar>
            <Main>
              <Breadcrumb>
                <Crumb><a href="#project">Project</a></Crumb>
                <Crumb><a href="#network">Network</a></Crumb>
                <Crumb $last>Network Topology</Crumb>
              </Breadcrumb>
              <Title>Network Topology</Title>
              <Actions $end>
                <ActionGroup>
                  <ActionButton><FaCloudUploadAlt size={14} />Launch Instance</ActionButton>
                  <ActionButton><Plus size={13} />Create Network</ActionButton>
                </ActionGroup>
                <ActionButton><Plus size={13} />Create Router</ActionButton>
              </Actions>
              <ViewTabs role="tablist">
                <ViewTab role="tab" aria-selected $active>Topology</ViewTab>
                <ViewTab role="tab" aria-selected={false}>Graph</ViewTab>
              </ViewTabs>
              <SizeToggle>
                <SizeButton aria-pressed $pressed><FaTh size={13} />Small</SizeButton>
                <SizeButton aria-pressed={false}><FaThLarge size={13} />Normal</SizeButton>
              </SizeToggle>
              <Topology />
              <Actions>
                <ActionButton $small><FaCloudUploadAlt size={11} />Launch Instance</ActionButton>
                <ActionButton $small><Plus size={11} />Create Network</ActionButton>
                <ActionButton $small><Plus size={11} />Create Router</ActionButton>
              </Actions>
            </Main>
          </Body>
        </Dashboard>
        <Scrollbar aria-hidden><Arrow /><Thumb /><Arrow $down /></Scrollbar>
      </Viewport>

      <DockArea>
        <Dock aria-label="Dock">
          <DockItem aria-label="Google Chrome" $focused $running><Chrome size={34} /></DockItem>
          <DockItem aria-label="Spotify"><FaSpotify size={29} color="#1fd760" /></DockItem>
          <DockItem aria-label="Visual Studio Code" $running><VsCode /></DockItem>
          <DockItem aria-label="Files"><Files /></DockItem>
          <DockItem aria-label="Software"><Software /></DockItem>
          <DockItem aria-label="Help"><Help /></DockItem>
          <DockRule />
          <DockItem aria-label="Terminal" $running><Terminal /></DockItem>
          <DockItem aria-label="Trash"><Trash /></DockItem>
          <DockItem aria-label="Show applications"><ShowApps /></DockItem>
        </Dock>
      </DockArea>
    </Desktop>
  );
}
